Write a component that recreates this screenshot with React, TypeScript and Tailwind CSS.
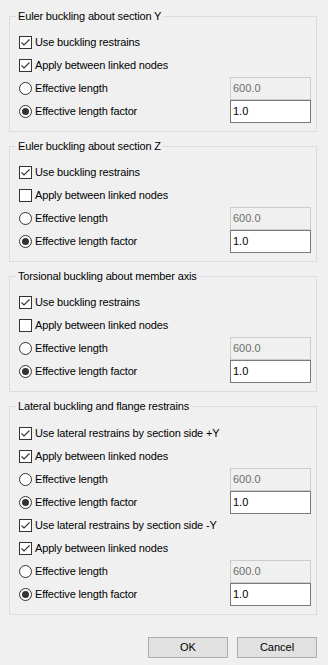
import React from "react";

const font = { fontFamily: '"Liberation Sans", Arial, sans-serif' };

function Check({ checked }: { checked: boolean }) {
  return (
    <span className="w-[13px] h-[13px] border border-[#333333] bg-white flex items-center justify-center shrink-0">
      {checked && (
        <svg width="11" height="11" viewBox="0 0 11 11">
          <path d="M1.5 5.5 L4 8 L9.5 2.5" fill="none" stroke="#333333" strokeWidth="1.1" />
        </svg>
      )}
    </span>
  );
}

function Radio({ checked }: { checked: boolean }) {
  return (
    <span className="w-[13px] h-[13px] rounded-full border border-[#333333] bg-white flex items-center justify-center shrink-0">
      {checked && <span className="w-[7px] h-[7px] rounded-full bg-[#333333]" />}
    </span>
  );
}

function CheckRow({ label, checked }: { label: string; checked: boolean }) {
  return (
    <div className="h-[23px] flex items-center gap-[3px]">
      <Check checked={checked} />
      <span className="tracking-[-0.15px]">{label}</span>
    </div>
  );
}

function RadioRow({ label, checked, value, disabled }: { label: string; checked: boolean; value: string; disabled: boolean }) {
  return (
    <div className="h-[23px] flex items-center">
      <div className="flex items-center gap-[3px] flex-1">
        <Radio checked={checked} />
        <span className="tracking-[-0.15px]">{label}</span>
      </div>
      <div
        className={
          disabled
            ? "w-[81px] h-[23px] border border-[#cccccc] bg-[#f0f0f0] text-[#6d6d6d] flex items-center pl-[2px]"
            : "w-[81px] h-[23px] border border-[#7a7a7a] bg-white text-black flex items-center pl-[2px]"
        }
      >
        {value}
      </div>
    </div>
  );
}

function Group({ title, children, last }: { title: string; children: React.ReactNode; last?: boolean }) {
  return (
    <div
      className={
        last
          ? "relative border border-[#dcdcdc] pt-[15px] pb-[8px] pl-[9px] pr-[5px]"
          : "relative border border-[#dcdcdc] pt-[14px] pb-[8px] pl-[9px] pr-[5px]"
      }
    >
      <span className="absolute left-[6px] top-[-8px] px-[2px] bg-[#f0f0f0] leading-[14px] tracking-[-0.15px]">
        {title}
      </span>
      {children}
    </div>
  );
}

function LengthRows() {
  return (
    <>
      <RadioRow label="Effective length" checked={false} value="600.0" disabled />
      <RadioRow label="Effective length factor" checked value="1.0" disabled={false} />
    </>
  );
}

export default function App() {
  return (
    <div className="w-[328px] h-[665px] bg-[#f0f0f0] text-[11px] text-black pl-[9px] pr-[11px] pt-[16px]" style={font}>
      <div className="flex flex-col gap-[14px]">
        <Group title="Euler buckling about section Y">
          <CheckRow label="Use buckling restrains" checked />
          <CheckRow label="Apply between linked nodes" checked />
          <LengthRows />
        </Group>
        <Group title="Euler buckling about section Z">
          <CheckRow label="Use buckling restrains" checked />
          <CheckRow label="Apply between linked nodes" checked={false} />
          <LengthRows />
        </Group>
        <Group title="Torsional buckling about member axis">
          <CheckRow label="Use buckling restrains" checked />
          <CheckRow label="Apply between linked nodes" checked={false} />
          <LengthRows />
        </Group>
        <Group title="Lateral buckling and flange restrains" last>
          <CheckRow label="Use lateral restrains by section side +Y" checked />
          <CheckRow label="Apply between linked nodes" checked />
          <LengthRows />
          <CheckRow label="Use lateral restrains by section side -Y" checked />
          <CheckRow label="Apply between linked nodes" checked />
          <LengthRows />
        </Group>
      </div>
      <div className="flex justify-end gap-[9px] mt-[22px]">
        <button className="w-[80px] h-[21px] border border-[#adadad] bg-[#e1e1e1] text-[11px]">OK</button>
        <button className="w-[80px] h-[21px] border border-[#adadad] bg-[#e1e1e1] text-[11px]">Cancel</button>
      </div>
    </div>
  );
}
